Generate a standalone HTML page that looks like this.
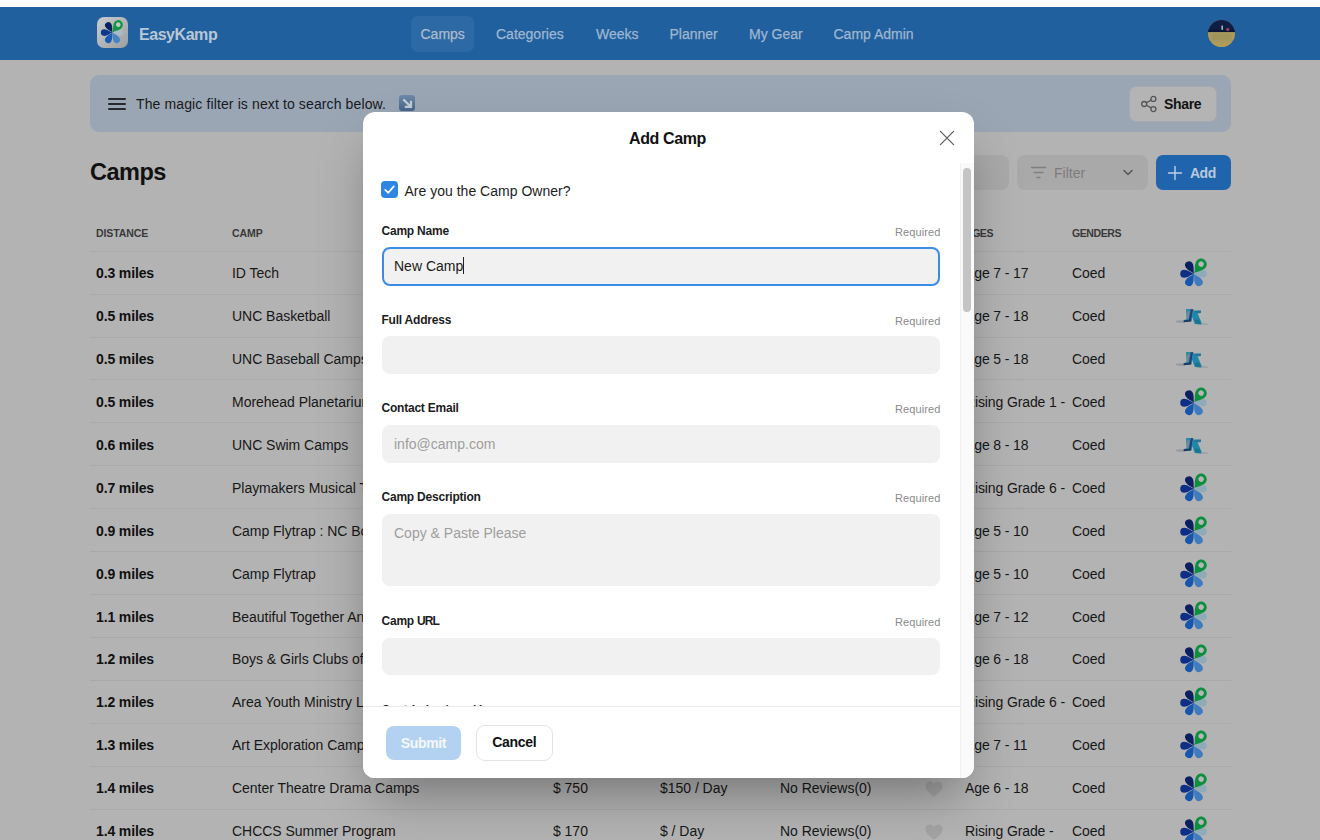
<!DOCTYPE html>
<html lang="en"><head><meta charset="utf-8"><title>EasyKamp - Camps</title>
<style>
*{box-sizing:border-box;margin:0;padding:0}
html,body{width:1320px;height:840px;overflow:hidden;background:#b3b3b3;font-family:"Liberation Sans",Arial,sans-serif;color:#141414}
.abs{position:absolute}
#topstrip{position:absolute;left:0;top:0;width:1320px;height:7px;background:#fffefc}
#nav{position:absolute;left:0;top:6.5px;width:1320px;height:53.5px;background:#20609f}
#brand{position:absolute;left:139px;top:18.5px;font-size:16px;font-weight:700;color:#b9c6d6;line-height:20px;letter-spacing:-0.45px}
.nv{position:absolute;top:18.7px;font-size:14px;line-height:18px;color:#9fb6cf;white-space:nowrap;letter-spacing:0;-webkit-text-stroke:.25px #9fb6cf}
#pill{position:absolute;left:411px;top:9.5px;width:63px;height:36px;border-radius:7px;background:#2d69a5}
#avatar{position:absolute;left:1208px;top:13.2px;width:27.4px;height:27.4px;border-radius:50%;overflow:hidden;background:#7d7446}
#banner{position:absolute;left:90px;top:75px;width:1141px;height:57px;border-radius:9px;background:#9ba6b4}
#bannertxt{position:absolute;left:136px;top:95px;font-size:14px;line-height:18px;color:#161a1f;white-space:nowrap;letter-spacing:.12px}
.hb{position:absolute;left:108px;width:17.5px;height:2px;background:#262a30;border-radius:1px}
#emoji{position:absolute;left:398.5px;top:94.5px;width:16.5px;height:16.5px;border-radius:3px;background:linear-gradient(#6f8aa8,#46648a)}
#share{position:absolute;left:1129px;top:86px;width:88px;height:36px;border-radius:7px;background:#b4b4b4;border:1px solid #a6aab0}
#share span{position:absolute;left:34px;top:8px;font-size:14px;font-weight:700;line-height:18px;color:#121212;letter-spacing:-.35px}
#h1{position:absolute;left:90px;top:157px;font-size:23.5px;font-weight:700;line-height:30px;color:#111;letter-spacing:-.5px}
#search{position:absolute;left:860px;top:155px;width:149px;height:35px;border-radius:8px;background:#a9a9a9}
#filter{position:absolute;left:1017px;top:155px;width:131px;height:35px;border-radius:8px;background:#a9a9a9}
#filter span{position:absolute;left:37px;top:9px;font-size:14px;line-height:18px;color:#7c7c7c;letter-spacing:0}
#add{position:absolute;left:1156px;top:155px;width:75px;height:35px;border-radius:7px;background:#1f64ad}
#add span{position:absolute;left:34px;top:8.5px;font-size:14px;font-weight:700;line-height:18px;color:#b9c9dc;letter-spacing:-.5px}
.th{position:absolute;top:226px;font-size:10.5px;font-weight:700;line-height:14px;color:#3a3a3a;letter-spacing:-.08px;white-space:nowrap}
.row{position:absolute;left:90px;width:1141px;height:43px;border-top:1px solid #a9a9a9}
.c{position:absolute;top:12.5px;font-size:14px;line-height:18px;white-space:nowrap;color:#171717;letter-spacing:-.03px}
.c1{left:6px;font-weight:700;letter-spacing:-.13px;color:#101010}
.c2{left:142px} .c3{left:463px} .c4{left:570px} .c5{left:690px} .c6{left:875px;letter-spacing:-.12px} .c7{left:982px}
.lg{position:absolute;left:1088.5px;top:6.45px;width:31px;height:31px}
.hl{position:absolute;left:1080px;top:2.5px;width:46px;height:40px}
.ht{position:absolute;left:834px;top:12px;width:20px;height:20px}
#modal{position:absolute;left:363px;top:111.5px;width:611px;height:666.5px;border-radius:12px;background:#fff;box-shadow:0 25px 50px -12px rgba(0,0,0,.37);overflow:hidden}
#mtitle{position:absolute;left:0;top:17px;width:609px;text-align:center;font-size:16px;font-weight:700;line-height:20px;color:#111;letter-spacing:-.37px}
#track{position:absolute;left:596.5px;top:51px;width:14.5px;height:616px;background:#fafafa;border-left:1px solid #f0f0f0}
#thumb{position:absolute;left:600.2px;top:56.5px;width:8px;height:144px;border-radius:4px;background:#c4c4c4}
#cb{position:absolute;left:18px;top:69.5px;width:17px;height:17px;border-radius:4px;background:#2f86e2}
#cbl{position:absolute;left:41.5px;top:70.3px;font-size:14px;line-height:18px;color:#1d1d1d;white-space:nowrap;letter-spacing:.01px}
.lb{position:absolute;left:18.5px;margin-top:-.7px;font-size:12px;font-weight:700;line-height:14px;color:#1c1c1c;white-space:nowrap;letter-spacing:-.22px}
.rq{position:absolute;right:33.5px;font-size:11px;line-height:14px;color:#8a8a8a;white-space:nowrap;letter-spacing:.1px}
.in{position:absolute;left:18.5px;margin-top:-.5px;width:558.2px;height:37.5px;border-radius:8px;background:#f1f1f1;font-size:14px;line-height:18px;color:#9e9e9e;padding:10.3px 12.5px 8px;letter-spacing:0;white-space:nowrap}
#in1{border:2px solid #3a8de6;color:#1b1b1b;padding:8.8px 10.5px 7px;background:#f1f1f1;height:39px;margin-top:-1px}
#caret{display:inline-block;width:1px;height:17px;background:#222;vertical-align:-3px;margin-left:0}
#clip{position:absolute;left:0;top:560px;width:597px;height:34.5px;overflow:hidden}
#foot{position:absolute;left:0;top:594.5px;width:597px;height:72px;background:#fff;border-top:1px solid #ececec}
#submit{position:absolute;left:23px;top:18.5px;width:75px;height:34px;border-radius:8px;background:#b3d2f1;color:#f3f8fd;font-size:14px;font-weight:700;line-height:34px;text-align:center;letter-spacing:-.35px}
#cancel{position:absolute;left:112.5px;top:17.5px;width:77.5px;height:36px;border-radius:9px;background:#fff;border:1px solid #e4e4e4;color:#111;font-size:14px;font-weight:700;line-height:33.5px;text-align:center;letter-spacing:-.28px}
</style></head><body>
<div id="nav">
  <svg class="abs" style="left:97px;top:10.6px" width="31" height="31" viewBox="0 0 31 31"><defs><linearGradient id="lgbg" x1="0" y1="0" x2="1" y2="1"><stop offset="0" stop-color="#c9ccce"/><stop offset="1" stop-color="#9c9ea0"/></linearGradient></defs><rect x="0" y="0" width="31" height="31" rx="7" fill="url(#lgbg)"/><g transform="translate(15.5,15.6)">
  <path transform="rotate(90) scale(.85)" fill="#a9bcc6" d="M0,0 C-0.8,-2.6 -3.7,-5.6 -3.7,-9.2 A3.7,3.7 0 0 1 3.7,-9.2 C3.7,-5.6 0.8,-2.6 0,0Z"/><path transform="rotate(150) scale(.9)" fill="#4684c4" d="M0,0 C-0.8,-2.6 -3.7,-5.6 -3.7,-9.2 A3.7,3.7 0 0 1 3.7,-9.2 C3.7,-5.6 0.8,-2.6 0,0Z"/><path transform="rotate(210) scale(.9)" fill="#1a5cb3" d="M0,0 C-0.8,-2.6 -3.7,-5.6 -3.7,-9.2 A3.7,3.7 0 0 1 3.7,-9.2 C3.7,-5.6 0.8,-2.6 0,0Z"/><path transform="rotate(270) scale(.9)" fill="#0e3890" d="M0,0 C-0.8,-2.6 -3.7,-5.6 -3.7,-9.2 A3.7,3.7 0 0 1 3.7,-9.2 C3.7,-5.6 0.8,-2.6 0,0Z"/><path transform="rotate(330) scale(.9)" fill="#0a2062" d="M0,0 C-0.8,-2.6 -3.7,-5.6 -3.7,-9.2 A3.7,3.7 0 0 1 3.7,-9.2 C3.7,-5.6 0.8,-2.6 0,0Z"/>
  <g transform="rotate(36)"><path fill="#0f9743" d="M0,-0.6 C-1,-3.2 -4.6,-6.2 -4.6,-9.8 A4.6,4.6 0 0 1 4.6,-9.8 C4.6,-6.2 1,-3.2 0,-0.6Z"/><circle cx="0" cy="-9.8" r="2.3" fill="#c6c6c6"/></g></g></svg>
  <div id="brand">EasyKamp</div>
  <div id="pill"></div>
  <div class="nv" style="left:420.5px;color:#b0bdcd">Camps</div>
  <div class="nv" style="left:496px">Categories</div>
  <div class="nv" style="left:596px">Weeks</div>
  <div class="nv" style="left:669.5px">Planner</div>
  <div class="nv" style="left:749px">My Gear</div>
  <div class="nv" style="left:833.5px">Camp Admin</div>
  <div id="avatar"><svg width="27.4" height="27.4" viewBox="0 0 27 27"><rect width="27" height="12" fill="#101d44"/><rect y="11.7" width="27" height="15.3" fill="#a89a5e"/><rect x="0" y="9.5" width="27" height="2.4" fill="#0a1538"/><rect x="13.2" y="5.5" width="1.6" height="4.2" fill="#a9b0c0"/><rect x="18" y="8.2" width="3" height="2.4" rx="1" fill="#b04a50"/><rect x="4" y="13.5" width="19" height="6" fill="#9d9058" opacity=".6"/><rect x="0" y="22" width="27" height="5" fill="#ad9f58"/></svg></div>
</div>
<div id="topstrip"></div>
<div id="banner"></div>
<div class="hb" style="top:97.8px"></div><div class="hb" style="top:102.8px"></div><div class="hb" style="top:107.8px"></div>
<div id="bannertxt">The magic filter is next to search below.</div>
<div id="emoji"><svg width="16.5" height="16.5" viewBox="0 0 16 16"><path d="M4.2,4.2 L11.4,11.4 M11.6,5.6 L11.6,11.6 L5.6,11.6" fill="none" stroke="#c3cbd3" stroke-width="2.2" stroke-linecap="butt"/></svg></div>
<div id="share"><svg class="abs" style="left:10px;top:8px" width="18" height="18" viewBox="0 0 18 18" fill="none" stroke="#555" stroke-width="1.3"><circle cx="4.2" cy="9" r="2.5"/><circle cx="13.4" cy="3.9" r="2.5"/><circle cx="13.4" cy="14.1" r="2.5"/><path d="M6.4,7.8 L11.2,5.1 M6.4,10.2 L11.2,12.9"/></svg><span>Share</span></div>
<div id="h1">Camps</div>
<div id="search"></div>
<div id="filter"><svg class="abs" style="left:13px;top:10px" width="17" height="16" viewBox="0 0 17 16" fill="none" stroke="#7f7f7f" stroke-width="1.4" stroke-linecap="round"><path d="M1.5,2.5 H15.5 M4,7.5 H13 M7,12.5 H10"/></svg><span>Filter</span><svg class="abs" style="left:105px;top:13px" width="12" height="9" viewBox="0 0 12 9" fill="none" stroke="#555" stroke-width="1.5" stroke-linecap="round" stroke-linejoin="round"><path d="M2,2.5 L6,6.5 L10,2.5"/></svg></div>
<div id="add"><svg class="abs" style="left:11px;top:9.5px" width="16" height="16" viewBox="0 0 16 16" fill="none" stroke="#c3d0e0" stroke-width="1.4" stroke-linecap="round"><path d="M8,1.5 V14.5 M1.5,8 H14.5"/></svg><span>Add</span></div>
<div class="th" style="left:96px">DISTANCE</div>
<div class="th" style="left:232px">CAMP</div>
<div class="th" style="left:553px">COST</div>
<div class="th" style="left:660px">DAILY COST</div>
<div class="th" style="left:780px">REVIEWS</div>
<div class="th" style="left:965px;letter-spacing:-.45px">AGES</div>
<div class="th" style="left:1072px;letter-spacing:-.42px">GENDERS</div>
<div class="row" style="top:250.7px"><span class="c c1">0.3 miles</span><span class="c c2">ID Tech</span><span class="c c3"></span><span class="c c4"></span><span class="c c5"></span><span class="c c6">Age 7 - 17</span><span class="c c7">Coed</span><svg class="lg" viewBox="0 0 28 28"><g transform="translate(13.5,14.2)"><path transform="rotate(90) scale(.9)" fill="#8fabb9" d="M0,0 C-0.8,-2.6 -3.7,-5.6 -3.7,-9.2 A3.7,3.7 0 0 1 3.7,-9.2 C3.7,-5.6 0.8,-2.6 0,0Z"/><path transform="rotate(150) scale(.96)" fill="#3f7cbf" d="M0,0 C-0.8,-2.6 -3.7,-5.6 -3.7,-9.2 A3.7,3.7 0 0 1 3.7,-9.2 C3.7,-5.6 0.8,-2.6 0,0Z"/><path transform="rotate(210) scale(.96)" fill="#1656ad" d="M0,0 C-0.8,-2.6 -3.7,-5.6 -3.7,-9.2 A3.7,3.7 0 0 1 3.7,-9.2 C3.7,-5.6 0.8,-2.6 0,0Z"/><path transform="rotate(270) scale(.96)" fill="#0d2f88" d="M0,0 C-0.8,-2.6 -3.7,-5.6 -3.7,-9.2 A3.7,3.7 0 0 1 3.7,-9.2 C3.7,-5.6 0.8,-2.6 0,0Z"/><path transform="rotate(330) scale(.96)" fill="#0a2060" d="M0,0 C-0.8,-2.6 -3.7,-5.6 -3.7,-9.2 A3.7,3.7 0 0 1 3.7,-9.2 C3.7,-5.6 0.8,-2.6 0,0Z"/><g transform="rotate(37)"><path fill="#0c8f3e" d="M0,-0.6 C-1,-3.4 -5.1,-6.9 -5.1,-10.8 A5.1,5.1 0 0 1 5.1,-10.8 C5.1,-6.9 1,-3.4 0,-0.6Z"/><circle cx="0" cy="-10.8" r="2.4" fill="#b6b6b6"/></g></g></svg></div>
<div class="row" style="top:293.62px"><span class="c c1">0.5 miles</span><span class="c c2">UNC Basketball</span><span class="c c3"></span><span class="c c4"></span><span class="c c5"></span><span class="c c6">Age 7 - 18</span><span class="c c7">Coed</span><svg class="hl" viewBox="0 0 966 840"><path d="M120,500 L300,486 L300,540 L140,536Z" fill="#8d9094" opacity=".8"/><path d="M620,536 L800,560 L790,590 L560,584Z" fill="#9a9c9f" opacity=".8"/><path d="M335,250 L480,250 L455,508 L290,528 L286,488 L350,462Z" fill="#2b8ca2"/><path d="M362,300 L418,300 L390,452 L352,458Z" fill="#75879a"/><path d="M436,258 L492,258 L440,486 L396,486Z" fill="#2c3c7c"/><path d="M478,282 L650,282 L650,336 L580,346 L664,540 L652,580 L520,566 L460,404Z" fill="#1f88aa"/><path d="M290,488 L444,474 L444,516 L290,530Z" fill="#1d3a66"/><path d="M520,294 L646,290 L646,330 L540,338Z" fill="#2d6f9c"/><path d="M516,470 L610,470 L650,562 L536,556Z" fill="#17758f"/></svg></div>
<div class="row" style="top:336.54px"><span class="c c1">0.5 miles</span><span class="c c2">UNC Baseball Camps</span><span class="c c3"></span><span class="c c4"></span><span class="c c5"></span><span class="c c6">Age 5 - 18</span><span class="c c7">Coed</span><svg class="hl" viewBox="0 0 966 840"><path d="M120,500 L300,486 L300,540 L140,536Z" fill="#8d9094" opacity=".8"/><path d="M620,536 L800,560 L790,590 L560,584Z" fill="#9a9c9f" opacity=".8"/><path d="M335,250 L480,250 L455,508 L290,528 L286,488 L350,462Z" fill="#2b8ca2"/><path d="M362,300 L418,300 L390,452 L352,458Z" fill="#75879a"/><path d="M436,258 L492,258 L440,486 L396,486Z" fill="#2c3c7c"/><path d="M478,282 L650,282 L650,336 L580,346 L664,540 L652,580 L520,566 L460,404Z" fill="#1f88aa"/><path d="M290,488 L444,474 L444,516 L290,530Z" fill="#1d3a66"/><path d="M520,294 L646,290 L646,330 L540,338Z" fill="#2d6f9c"/><path d="M516,470 L610,470 L650,562 L536,556Z" fill="#17758f"/></svg></div>
<div class="row" style="top:379.46px"><span class="c c1">0.5 miles</span><span class="c c2">Morehead Planetarium</span><span class="c c3"></span><span class="c c4"></span><span class="c c5"></span><span class="c c6">Rising Grade 1 -</span><span class="c c7">Coed</span><svg class="lg" viewBox="0 0 28 28"><g transform="translate(13.5,14.2)"><path transform="rotate(90) scale(.9)" fill="#8fabb9" d="M0,0 C-0.8,-2.6 -3.7,-5.6 -3.7,-9.2 A3.7,3.7 0 0 1 3.7,-9.2 C3.7,-5.6 0.8,-2.6 0,0Z"/><path transform="rotate(150) scale(.96)" fill="#3f7cbf" d="M0,0 C-0.8,-2.6 -3.7,-5.6 -3.7,-9.2 A3.7,3.7 0 0 1 3.7,-9.2 C3.7,-5.6 0.8,-2.6 0,0Z"/><path transform="rotate(210) scale(.96)" fill="#1656ad" d="M0,0 C-0.8,-2.6 -3.7,-5.6 -3.7,-9.2 A3.7,3.7 0 0 1 3.7,-9.2 C3.7,-5.6 0.8,-2.6 0,0Z"/><path transform="rotate(270) scale(.96)" fill="#0d2f88" d="M0,0 C-0.8,-2.6 -3.7,-5.6 -3.7,-9.2 A3.7,3.7 0 0 1 3.7,-9.2 C3.7,-5.6 0.8,-2.6 0,0Z"/><path transform="rotate(330) scale(.96)" fill="#0a2060" d="M0,0 C-0.8,-2.6 -3.7,-5.6 -3.7,-9.2 A3.7,3.7 0 0 1 3.7,-9.2 C3.7,-5.6 0.8,-2.6 0,0Z"/><g transform="rotate(37)"><path fill="#0c8f3e" d="M0,-0.6 C-1,-3.4 -5.1,-6.9 -5.1,-10.8 A5.1,5.1 0 0 1 5.1,-10.8 C5.1,-6.9 1,-3.4 0,-0.6Z"/><circle cx="0" cy="-10.8" r="2.4" fill="#b6b6b6"/></g></g></svg></div>
<div class="row" style="top:422.38px"><span class="c c1">0.6 miles</span><span class="c c2">UNC Swim Camps</span><span class="c c3"></span><span class="c c4"></span><span class="c c5"></span><span class="c c6">Age 8 - 18</span><span class="c c7">Coed</span><svg class="hl" viewBox="0 0 966 840"><path d="M120,500 L300,486 L300,540 L140,536Z" fill="#8d9094" opacity=".8"/><path d="M620,536 L800,560 L790,590 L560,584Z" fill="#9a9c9f" opacity=".8"/><path d="M335,250 L480,250 L455,508 L290,528 L286,488 L350,462Z" fill="#2b8ca2"/><path d="M362,300 L418,300 L390,452 L352,458Z" fill="#75879a"/><path d="M436,258 L492,258 L440,486 L396,486Z" fill="#2c3c7c"/><path d="M478,282 L650,282 L650,336 L580,346 L664,540 L652,580 L520,566 L460,404Z" fill="#1f88aa"/><path d="M290,488 L444,474 L444,516 L290,530Z" fill="#1d3a66"/><path d="M520,294 L646,290 L646,330 L540,338Z" fill="#2d6f9c"/><path d="M516,470 L610,470 L650,562 L536,556Z" fill="#17758f"/></svg></div>
<div class="row" style="top:465.3px"><span class="c c1">0.7 miles</span><span class="c c2">Playmakers Musical Theatre</span><span class="c c3"></span><span class="c c4"></span><span class="c c5"></span><span class="c c6">Rising Grade 6 -</span><span class="c c7">Coed</span><svg class="lg" viewBox="0 0 28 28"><g transform="translate(13.5,14.2)"><path transform="rotate(90) scale(.9)" fill="#8fabb9" d="M0,0 C-0.8,-2.6 -3.7,-5.6 -3.7,-9.2 A3.7,3.7 0 0 1 3.7,-9.2 C3.7,-5.6 0.8,-2.6 0,0Z"/><path transform="rotate(150) scale(.96)" fill="#3f7cbf" d="M0,0 C-0.8,-2.6 -3.7,-5.6 -3.7,-9.2 A3.7,3.7 0 0 1 3.7,-9.2 C3.7,-5.6 0.8,-2.6 0,0Z"/><path transform="rotate(210) scale(.96)" fill="#1656ad" d="M0,0 C-0.8,-2.6 -3.7,-5.6 -3.7,-9.2 A3.7,3.7 0 0 1 3.7,-9.2 C3.7,-5.6 0.8,-2.6 0,0Z"/><path transform="rotate(270) scale(.96)" fill="#0d2f88" d="M0,0 C-0.8,-2.6 -3.7,-5.6 -3.7,-9.2 A3.7,3.7 0 0 1 3.7,-9.2 C3.7,-5.6 0.8,-2.6 0,0Z"/><path transform="rotate(330) scale(.96)" fill="#0a2060" d="M0,0 C-0.8,-2.6 -3.7,-5.6 -3.7,-9.2 A3.7,3.7 0 0 1 3.7,-9.2 C3.7,-5.6 0.8,-2.6 0,0Z"/><g transform="rotate(37)"><path fill="#0c8f3e" d="M0,-0.6 C-1,-3.4 -5.1,-6.9 -5.1,-10.8 A5.1,5.1 0 0 1 5.1,-10.8 C5.1,-6.9 1,-3.4 0,-0.6Z"/><circle cx="0" cy="-10.8" r="2.4" fill="#b6b6b6"/></g></g></svg></div>
<div class="row" style="top:508.22px"><span class="c c1">0.9 miles</span><span class="c c2">Camp Flytrap : NC Botanical</span><span class="c c3"></span><span class="c c4"></span><span class="c c5"></span><span class="c c6">Age 5 - 10</span><span class="c c7">Coed</span><svg class="lg" viewBox="0 0 28 28"><g transform="translate(13.5,14.2)"><path transform="rotate(90) scale(.9)" fill="#8fabb9" d="M0,0 C-0.8,-2.6 -3.7,-5.6 -3.7,-9.2 A3.7,3.7 0 0 1 3.7,-9.2 C3.7,-5.6 0.8,-2.6 0,0Z"/><path transform="rotate(150) scale(.96)" fill="#3f7cbf" d="M0,0 C-0.8,-2.6 -3.7,-5.6 -3.7,-9.2 A3.7,3.7 0 0 1 3.7,-9.2 C3.7,-5.6 0.8,-2.6 0,0Z"/><path transform="rotate(210) scale(.96)" fill="#1656ad" d="M0,0 C-0.8,-2.6 -3.7,-5.6 -3.7,-9.2 A3.7,3.7 0 0 1 3.7,-9.2 C3.7,-5.6 0.8,-2.6 0,0Z"/><path transform="rotate(270) scale(.96)" fill="#0d2f88" d="M0,0 C-0.8,-2.6 -3.7,-5.6 -3.7,-9.2 A3.7,3.7 0 0 1 3.7,-9.2 C3.7,-5.6 0.8,-2.6 0,0Z"/><path transform="rotate(330) scale(.96)" fill="#0a2060" d="M0,0 C-0.8,-2.6 -3.7,-5.6 -3.7,-9.2 A3.7,3.7 0 0 1 3.7,-9.2 C3.7,-5.6 0.8,-2.6 0,0Z"/><g transform="rotate(37)"><path fill="#0c8f3e" d="M0,-0.6 C-1,-3.4 -5.1,-6.9 -5.1,-10.8 A5.1,5.1 0 0 1 5.1,-10.8 C5.1,-6.9 1,-3.4 0,-0.6Z"/><circle cx="0" cy="-10.8" r="2.4" fill="#b6b6b6"/></g></g></svg></div>
<div class="row" style="top:551.14px"><span class="c c1">0.9 miles</span><span class="c c2">Camp Flytrap</span><span class="c c3"></span><span class="c c4"></span><span class="c c5"></span><span class="c c6">Age 5 - 10</span><span class="c c7">Coed</span><svg class="lg" viewBox="0 0 28 28"><g transform="translate(13.5,14.2)"><path transform="rotate(90) scale(.9)" fill="#8fabb9" d="M0,0 C-0.8,-2.6 -3.7,-5.6 -3.7,-9.2 A3.7,3.7 0 0 1 3.7,-9.2 C3.7,-5.6 0.8,-2.6 0,0Z"/><path transform="rotate(150) scale(.96)" fill="#3f7cbf" d="M0,0 C-0.8,-2.6 -3.7,-5.6 -3.7,-9.2 A3.7,3.7 0 0 1 3.7,-9.2 C3.7,-5.6 0.8,-2.6 0,0Z"/><path transform="rotate(210) scale(.96)" fill="#1656ad" d="M0,0 C-0.8,-2.6 -3.7,-5.6 -3.7,-9.2 A3.7,3.7 0 0 1 3.7,-9.2 C3.7,-5.6 0.8,-2.6 0,0Z"/><path transform="rotate(270) scale(.96)" fill="#0d2f88" d="M0,0 C-0.8,-2.6 -3.7,-5.6 -3.7,-9.2 A3.7,3.7 0 0 1 3.7,-9.2 C3.7,-5.6 0.8,-2.6 0,0Z"/><path transform="rotate(330) scale(.96)" fill="#0a2060" d="M0,0 C-0.8,-2.6 -3.7,-5.6 -3.7,-9.2 A3.7,3.7 0 0 1 3.7,-9.2 C3.7,-5.6 0.8,-2.6 0,0Z"/><g transform="rotate(37)"><path fill="#0c8f3e" d="M0,-0.6 C-1,-3.4 -5.1,-6.9 -5.1,-10.8 A5.1,5.1 0 0 1 5.1,-10.8 C5.1,-6.9 1,-3.4 0,-0.6Z"/><circle cx="0" cy="-10.8" r="2.4" fill="#b6b6b6"/></g></g></svg></div>
<div class="row" style="top:594.06px"><span class="c c1">1.1 miles</span><span class="c c2">Beautiful Together Animal</span><span class="c c3"></span><span class="c c4"></span><span class="c c5"></span><span class="c c6">Age 7 - 12</span><span class="c c7">Coed</span><svg class="lg" viewBox="0 0 28 28"><g transform="translate(13.5,14.2)"><path transform="rotate(90) scale(.9)" fill="#8fabb9" d="M0,0 C-0.8,-2.6 -3.7,-5.6 -3.7,-9.2 A3.7,3.7 0 0 1 3.7,-9.2 C3.7,-5.6 0.8,-2.6 0,0Z"/><path transform="rotate(150) scale(.96)" fill="#3f7cbf" d="M0,0 C-0.8,-2.6 -3.7,-5.6 -3.7,-9.2 A3.7,3.7 0 0 1 3.7,-9.2 C3.7,-5.6 0.8,-2.6 0,0Z"/><path transform="rotate(210) scale(.96)" fill="#1656ad" d="M0,0 C-0.8,-2.6 -3.7,-5.6 -3.7,-9.2 A3.7,3.7 0 0 1 3.7,-9.2 C3.7,-5.6 0.8,-2.6 0,0Z"/><path transform="rotate(270) scale(.96)" fill="#0d2f88" d="M0,0 C-0.8,-2.6 -3.7,-5.6 -3.7,-9.2 A3.7,3.7 0 0 1 3.7,-9.2 C3.7,-5.6 0.8,-2.6 0,0Z"/><path transform="rotate(330) scale(.96)" fill="#0a2060" d="M0,0 C-0.8,-2.6 -3.7,-5.6 -3.7,-9.2 A3.7,3.7 0 0 1 3.7,-9.2 C3.7,-5.6 0.8,-2.6 0,0Z"/><g transform="rotate(37)"><path fill="#0c8f3e" d="M0,-0.6 C-1,-3.4 -5.1,-6.9 -5.1,-10.8 A5.1,5.1 0 0 1 5.1,-10.8 C5.1,-6.9 1,-3.4 0,-0.6Z"/><circle cx="0" cy="-10.8" r="2.4" fill="#b6b6b6"/></g></g></svg></div>
<div class="row" style="top:636.98px"><span class="c c1">1.2 miles</span><span class="c c2">Boys &amp; Girls Clubs of Durham</span><span class="c c3"></span><span class="c c4"></span><span class="c c5"></span><span class="c c6">Age 6 - 18</span><span class="c c7">Coed</span><svg class="lg" viewBox="0 0 28 28"><g transform="translate(13.5,14.2)"><path transform="rotate(90) scale(.9)" fill="#8fabb9" d="M0,0 C-0.8,-2.6 -3.7,-5.6 -3.7,-9.2 A3.7,3.7 0 0 1 3.7,-9.2 C3.7,-5.6 0.8,-2.6 0,0Z"/><path transform="rotate(150) scale(.96)" fill="#3f7cbf" d="M0,0 C-0.8,-2.6 -3.7,-5.6 -3.7,-9.2 A3.7,3.7 0 0 1 3.7,-9.2 C3.7,-5.6 0.8,-2.6 0,0Z"/><path transform="rotate(210) scale(.96)" fill="#1656ad" d="M0,0 C-0.8,-2.6 -3.7,-5.6 -3.7,-9.2 A3.7,3.7 0 0 1 3.7,-9.2 C3.7,-5.6 0.8,-2.6 0,0Z"/><path transform="rotate(270) scale(.96)" fill="#0d2f88" d="M0,0 C-0.8,-2.6 -3.7,-5.6 -3.7,-9.2 A3.7,3.7 0 0 1 3.7,-9.2 C3.7,-5.6 0.8,-2.6 0,0Z"/><path transform="rotate(330) scale(.96)" fill="#0a2060" d="M0,0 C-0.8,-2.6 -3.7,-5.6 -3.7,-9.2 A3.7,3.7 0 0 1 3.7,-9.2 C3.7,-5.6 0.8,-2.6 0,0Z"/><g transform="rotate(37)"><path fill="#0c8f3e" d="M0,-0.6 C-1,-3.4 -5.1,-6.9 -5.1,-10.8 A5.1,5.1 0 0 1 5.1,-10.8 C5.1,-6.9 1,-3.4 0,-0.6Z"/><circle cx="0" cy="-10.8" r="2.4" fill="#b6b6b6"/></g></g></svg></div>
<div class="row" style="top:679.9px"><span class="c c1">1.2 miles</span><span class="c c2">Area Youth Ministry Leaders</span><span class="c c3"></span><span class="c c4"></span><span class="c c5"></span><span class="c c6">Rising Grade 6 -</span><span class="c c7">Coed</span><svg class="lg" viewBox="0 0 28 28"><g transform="translate(13.5,14.2)"><path transform="rotate(90) scale(.9)" fill="#8fabb9" d="M0,0 C-0.8,-2.6 -3.7,-5.6 -3.7,-9.2 A3.7,3.7 0 0 1 3.7,-9.2 C3.7,-5.6 0.8,-2.6 0,0Z"/><path transform="rotate(150) scale(.96)" fill="#3f7cbf" d="M0,0 C-0.8,-2.6 -3.7,-5.6 -3.7,-9.2 A3.7,3.7 0 0 1 3.7,-9.2 C3.7,-5.6 0.8,-2.6 0,0Z"/><path transform="rotate(210) scale(.96)" fill="#1656ad" d="M0,0 C-0.8,-2.6 -3.7,-5.6 -3.7,-9.2 A3.7,3.7 0 0 1 3.7,-9.2 C3.7,-5.6 0.8,-2.6 0,0Z"/><path transform="rotate(270) scale(.96)" fill="#0d2f88" d="M0,0 C-0.8,-2.6 -3.7,-5.6 -3.7,-9.2 A3.7,3.7 0 0 1 3.7,-9.2 C3.7,-5.6 0.8,-2.6 0,0Z"/><path transform="rotate(330) scale(.96)" fill="#0a2060" d="M0,0 C-0.8,-2.6 -3.7,-5.6 -3.7,-9.2 A3.7,3.7 0 0 1 3.7,-9.2 C3.7,-5.6 0.8,-2.6 0,0Z"/><g transform="rotate(37)"><path fill="#0c8f3e" d="M0,-0.6 C-1,-3.4 -5.1,-6.9 -5.1,-10.8 A5.1,5.1 0 0 1 5.1,-10.8 C5.1,-6.9 1,-3.4 0,-0.6Z"/><circle cx="0" cy="-10.8" r="2.4" fill="#b6b6b6"/></g></g></svg></div>
<div class="row" style="top:722.82px"><span class="c c1">1.3 miles</span><span class="c c2">Art Exploration Camp</span><span class="c c3"></span><span class="c c4"></span><span class="c c5"></span><span class="c c6">Age 7 - 11</span><span class="c c7">Coed</span><svg class="lg" viewBox="0 0 28 28"><g transform="translate(13.5,14.2)"><path transform="rotate(90) scale(.9)" fill="#8fabb9" d="M0,0 C-0.8,-2.6 -3.7,-5.6 -3.7,-9.2 A3.7,3.7 0 0 1 3.7,-9.2 C3.7,-5.6 0.8,-2.6 0,0Z"/><path transform="rotate(150) scale(.96)" fill="#3f7cbf" d="M0,0 C-0.8,-2.6 -3.7,-5.6 -3.7,-9.2 A3.7,3.7 0 0 1 3.7,-9.2 C3.7,-5.6 0.8,-2.6 0,0Z"/><path transform="rotate(210) scale(.96)" fill="#1656ad" d="M0,0 C-0.8,-2.6 -3.7,-5.6 -3.7,-9.2 A3.7,3.7 0 0 1 3.7,-9.2 C3.7,-5.6 0.8,-2.6 0,0Z"/><path transform="rotate(270) scale(.96)" fill="#0d2f88" d="M0,0 C-0.8,-2.6 -3.7,-5.6 -3.7,-9.2 A3.7,3.7 0 0 1 3.7,-9.2 C3.7,-5.6 0.8,-2.6 0,0Z"/><path transform="rotate(330) scale(.96)" fill="#0a2060" d="M0,0 C-0.8,-2.6 -3.7,-5.6 -3.7,-9.2 A3.7,3.7 0 0 1 3.7,-9.2 C3.7,-5.6 0.8,-2.6 0,0Z"/><g transform="rotate(37)"><path fill="#0c8f3e" d="M0,-0.6 C-1,-3.4 -5.1,-6.9 -5.1,-10.8 A5.1,5.1 0 0 1 5.1,-10.8 C5.1,-6.9 1,-3.4 0,-0.6Z"/><circle cx="0" cy="-10.8" r="2.4" fill="#b6b6b6"/></g></g></svg></div>
<div class="row" style="top:765.74px"><span class="c c1">1.4 miles</span><span class="c c2">Center Theatre Drama Camps</span><span class="c c3">$ 750</span><span class="c c4">$150 / Day</span><span class="c c5">No Reviews(0)</span><svg class="ht" viewBox="0 0 20 20"><path fill="#a3a3a3" d="M10,17.6 C4.6,13.4 1.4,10.6 1.4,6.9 C1.4,4.2 3.4,2.4 5.8,2.4 C7.5,2.4 9.1,3.3 10,4.9 C10.9,3.3 12.5,2.4 14.2,2.4 C16.6,2.4 18.6,4.2 18.6,6.9 C18.6,10.6 15.4,13.4 10,17.6Z"/></svg><span class="c c6">Age 6 - 18</span><span class="c c7">Coed</span><svg class="lg" viewBox="0 0 28 28"><g transform="translate(13.5,14.2)"><path transform="rotate(90) scale(.9)" fill="#8fabb9" d="M0,0 C-0.8,-2.6 -3.7,-5.6 -3.7,-9.2 A3.7,3.7 0 0 1 3.7,-9.2 C3.7,-5.6 0.8,-2.6 0,0Z"/><path transform="rotate(150) scale(.96)" fill="#3f7cbf" d="M0,0 C-0.8,-2.6 -3.7,-5.6 -3.7,-9.2 A3.7,3.7 0 0 1 3.7,-9.2 C3.7,-5.6 0.8,-2.6 0,0Z"/><path transform="rotate(210) scale(.96)" fill="#1656ad" d="M0,0 C-0.8,-2.6 -3.7,-5.6 -3.7,-9.2 A3.7,3.7 0 0 1 3.7,-9.2 C3.7,-5.6 0.8,-2.6 0,0Z"/><path transform="rotate(270) scale(.96)" fill="#0d2f88" d="M0,0 C-0.8,-2.6 -3.7,-5.6 -3.7,-9.2 A3.7,3.7 0 0 1 3.7,-9.2 C3.7,-5.6 0.8,-2.6 0,0Z"/><path transform="rotate(330) scale(.96)" fill="#0a2060" d="M0,0 C-0.8,-2.6 -3.7,-5.6 -3.7,-9.2 A3.7,3.7 0 0 1 3.7,-9.2 C3.7,-5.6 0.8,-2.6 0,0Z"/><g transform="rotate(37)"><path fill="#0c8f3e" d="M0,-0.6 C-1,-3.4 -5.1,-6.9 -5.1,-10.8 A5.1,5.1 0 0 1 5.1,-10.8 C5.1,-6.9 1,-3.4 0,-0.6Z"/><circle cx="0" cy="-10.8" r="2.4" fill="#b6b6b6"/></g></g></svg></div>
<div class="row" style="top:808.66px"><span class="c c1">1.4 miles</span><span class="c c2">CHCCS Summer Program</span><span class="c c3">$ 170</span><span class="c c4">$ / Day</span><span class="c c5">No Reviews(0)</span><svg class="ht" viewBox="0 0 20 20"><path fill="#a3a3a3" d="M10,17.6 C4.6,13.4 1.4,10.6 1.4,6.9 C1.4,4.2 3.4,2.4 5.8,2.4 C7.5,2.4 9.1,3.3 10,4.9 C10.9,3.3 12.5,2.4 14.2,2.4 C16.6,2.4 18.6,4.2 18.6,6.9 C18.6,10.6 15.4,13.4 10,17.6Z"/></svg><span class="c c6">Rising Grade -</span><span class="c c7">Coed</span><svg class="lg" viewBox="0 0 28 28"><g transform="translate(13.5,14.2)"><path transform="rotate(90) scale(.9)" fill="#8fabb9" d="M0,0 C-0.8,-2.6 -3.7,-5.6 -3.7,-9.2 A3.7,3.7 0 0 1 3.7,-9.2 C3.7,-5.6 0.8,-2.6 0,0Z"/><path transform="rotate(150) scale(.96)" fill="#3f7cbf" d="M0,0 C-0.8,-2.6 -3.7,-5.6 -3.7,-9.2 A3.7,3.7 0 0 1 3.7,-9.2 C3.7,-5.6 0.8,-2.6 0,0Z"/><path transform="rotate(210) scale(.96)" fill="#1656ad" d="M0,0 C-0.8,-2.6 -3.7,-5.6 -3.7,-9.2 A3.7,3.7 0 0 1 3.7,-9.2 C3.7,-5.6 0.8,-2.6 0,0Z"/><path transform="rotate(270) scale(.96)" fill="#0d2f88" d="M0,0 C-0.8,-2.6 -3.7,-5.6 -3.7,-9.2 A3.7,3.7 0 0 1 3.7,-9.2 C3.7,-5.6 0.8,-2.6 0,0Z"/><path transform="rotate(330) scale(.96)" fill="#0a2060" d="M0,0 C-0.8,-2.6 -3.7,-5.6 -3.7,-9.2 A3.7,3.7 0 0 1 3.7,-9.2 C3.7,-5.6 0.8,-2.6 0,0Z"/><g transform="rotate(37)"><path fill="#0c8f3e" d="M0,-0.6 C-1,-3.4 -5.1,-6.9 -5.1,-10.8 A5.1,5.1 0 0 1 5.1,-10.8 C5.1,-6.9 1,-3.4 0,-0.6Z"/><circle cx="0" cy="-10.8" r="2.4" fill="#b6b6b6"/></g></g></svg></div>
<div id="modal">
  <div id="mtitle">Add Camp</div>
  <svg class="abs" style="left:575px;top:17.8px" width="18" height="18" viewBox="0 0 18 18" fill="none" stroke="#606060" stroke-width="1.25" stroke-linecap="round"><path d="M2.4,2.4 L15.6,15.6 M15.6,2.4 L2.4,15.6"/></svg>
  <div id="track"></div><div id="thumb"></div>
  <div id="cb"><svg width="17" height="17" viewBox="0 0 17 17" fill="none" stroke="#fff" stroke-width="1.7" stroke-linecap="round" stroke-linejoin="round"><path d="M4.2,8.9 L7.3,11.8 L12.8,5.4"/></svg></div>
  <div id="cbl">Are you the Camp Owner?</div>
  <div class="lb" style="top:113px">Camp Name</div><div class="rq" style="top:113px">Required</div>
  <div class="in" id="in1" style="top:136px">New Camp<span id="caret"></span></div>
  <div class="lb" style="top:202px">Full Address</div><div class="rq" style="top:202px">Required</div>
  <div class="in" style="top:225px"></div>
  <div class="lb" style="top:290.5px">Contact Email</div><div class="rq" style="top:290.5px">Required</div>
  <div class="in" style="top:314px">info@camp.com</div>
  <div class="lb" style="top:379px">Camp Description</div><div class="rq" style="top:379px">Required</div>
  <div class="in" style="top:402.5px;height:72.5px">Copy &amp; Paste Please</div>
  <div class="lb" style="top:503px">Camp <span style="letter-spacing:-.9px">URL</span></div><div class="rq" style="top:503px">Required</div>
  <div class="in" style="top:526.5px"></div>
  <div id="clip"><div class="lb" style="top:32.4px">Cost (price / week)</div></div>
  <div id="foot"><div id="submit">Submit</div><div id="cancel">Cancel</div></div>
</div>
</body></html>
